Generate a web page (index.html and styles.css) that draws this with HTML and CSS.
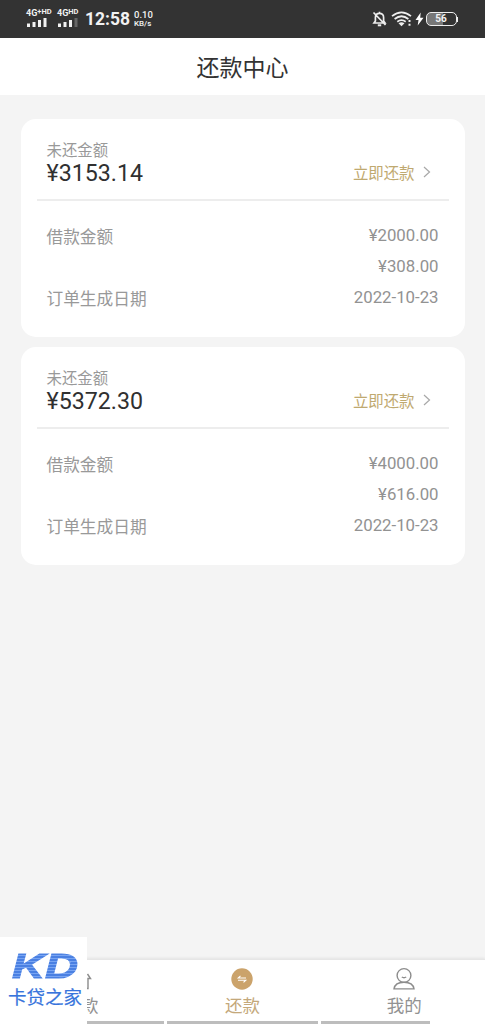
FILE: index.html
```html
<!DOCTYPE html>
<html lang="zh-CN">
<head>
<meta charset="utf-8">
<title>还款中心</title>
<link rel="stylesheet" href="styles.css">
</head>
<body>
<div class="screen">
  <div class="status">
    <div class="signal">
      <div class="net">4G<sup>+HD</sup></div>
      <svg width="21" height="9" viewBox="0 0 21 9" fill="#f2f2f2"><rect x="0" y="5.500" width="3" height="3.500"/><rect x="5.500" y="4" width="3" height="5"/><rect x="11" y="2" width="3" height="7"/><rect x="16.500" y="0" width="3" height="9"/></svg>
    </div>
    <div class="signal second">
      <div class="net">4G<sup>HD</sup></div>
      <svg width="21" height="9" viewBox="0 0 21 9" fill="#f2f2f2"><rect x="0" y="5.500" width="3" height="3.500"/><rect x="5.500" y="4" width="3" height="5"/><rect x="11" y="2" width="3" height="7"/><rect x="16.500" y="0" width="3" height="9" fill="#666"/></svg>
    </div>
    <div class="clock">12:58</div>
    <div class="speed"><div>0.10</div><div>KB/s</div></div>
    <div class="indicators">
      <svg width="15" height="16" viewBox="0 0 15 16" fill="none" stroke="#eee" stroke-width="1.700"><path d="M2 12h11l-1.400-2V6.500C11.600 4 10 2.300 7.500 2.300S3.400 4 3.400 6.500V10zM7.500.7v1.600M1.500 1.500l12 12.500"/><path d="M5.800 14.300h3.400" stroke-width="2"/></svg>
      <svg class="wifi" width="22" height="16" viewBox="0 0 22 16" fill="none" stroke="#eee" stroke-width="1.700"><path d="M1 5.200Q10.500-2.300 20 5.200M3.600 8Q10.500 2.500 17.400 8M6.300 10.700Q10.500 7.500 14.700 10.700"/><path d="M7.500 12.300Q10.500 10.300 13.500 12.300L10.500 15.300z" fill="#eee" stroke="none"/><path d="M18.500 9v2M18.500 12.800v2" stroke-width="2"/></svg>
      <svg class="bolt" width="9" height="14" viewBox="0 0 9 14" fill="#fff"><path d="M5.700.5 0.500 8h3L2.700 13.500 8.500 5.700H5.200z"/></svg>
      <div class="battery"><span class="level">56</span></div><i class="battery-tip"></i>
    </div>
  </div>
  <header class="header">还款中心</header>
  <main class="list">
    <section class="card">
      <div class="summary">
        <div><div class="caption">未还金额</div><div class="amount">¥3153.14</div></div>
        <a class="pay">立即还款<svg width="8" height="12" viewBox="0 0 8 12" fill="none" stroke="#a8a8a8" stroke-width="1.200"><path d="M1 1l5.500 5L1 11"/></svg></a>
      </div>
      <div class="details">
        <div class="row"><span>借款金额</span><span>¥2000.00</span></div>
        <div class="row"><span></span><span>¥308.00</span></div>
        <div class="row"><span>订单生成日期</span><span>2022-10-23</span></div>
      </div>
    </section>
    <section class="card">
      <div class="summary">
        <div><div class="caption">未还金额</div><div class="amount">¥5372.30</div></div>
        <a class="pay">立即还款<svg width="8" height="12" viewBox="0 0 8 12" fill="none" stroke="#a8a8a8" stroke-width="1.200"><path d="M1 1l5.500 5L1 11"/></svg></a>
      </div>
      <div class="details">
        <div class="row"><span>借款金额</span><span>¥4000.00</span></div>
        <div class="row"><span></span><span>¥616.00</span></div>
        <div class="row"><span>订单生成日期</span><span>2022-10-23</span></div>
      </div>
    </section>
  </main>
  <footer class="footer">
    <nav class="tabs">
      <div class="tab"><svg width="24" height="24" viewBox="0 0 24 24" fill="none" stroke="#8c8c8c" stroke-width="1.400"><path d="M12 2 5 6v15.500h14V11.500h2.500L18.500 7"/></svg><span>款</span></div>
      <div class="tab active"><svg width="24" height="24" viewBox="0 0 24 24"><circle cx="12" cy="12" r="10.700" fill="#cba36b"/><path d="M16 11H8.200l2.300-2.200M8 13.200h7.800l-2.300 2.200" fill="none" stroke="#fff" stroke-width="1.100"/></svg><span>还款</span></div>
      <div class="tab"><svg width="24" height="24" viewBox="0 0 24 24" fill="none" stroke="#8c8c8c" stroke-width="1.400"><circle cx="12" cy="8.500" r="6.900"/><path d="M9.800 10q2.200 1.400 4.400 0M2 21.900Q3 15.300 12 15.300T22 21.900z"/></svg><span>我的</span></div>
    </nav>
    <div class="strips"><i></i><i></i><i></i></div>
    <div class="watermark"><div class="mark">KD</div><div class="brand">卡贷之家</div></div>
  </footer>
</div>
</body>
</html>
```
FILE: styles.css
```css
* { box-sizing: border-box; }
body { margin: 0; font-family: Roboto, "Noto Sans CJK SC", sans-serif; }
.screen { width: 485px; height: 1024px; display: flex; flex-direction: column; background: #f4f4f4; overflow: hidden; }
svg { display: block; flex: none; }

.status { height: 38px; flex: none; background: #333; color: #f2f2f2; display: flex; align-items: center; padding: 0 27px 0 26px; }
.signal { width: 31px; height: 17px; margin-bottom: 2px; display: flex; flex-direction: column; justify-content: space-between; }
.signal svg { margin-left: 1px; }
.second { width: 28px; }
.net { font-size: 9px; line-height: 7px; font-weight: 700; white-space: nowrap; }
.net sup { font-size: 7.500px; line-height: 0; vertical-align: 2px; }
.clock { font-size: 17.500px; line-height: 20px; font-weight: 700; width: 49px; white-space: nowrap; }
.speed { font-size: 9.500px; line-height: 9px; font-weight: 500; }
.speed div + div { font-size: 8px; }
.indicators { margin-left: auto; display: flex; align-items: center; }
.indicators > svg:first-child { margin-right: -1px; position: relative; left: -2px; }
.wifi { margin-left: 3px; }
.bolt { margin-left: 2px; }
.battery { width: 31px; height: 14px; margin-left: 2px; border: 1.500px solid #eee; border-radius: 5px; background: linear-gradient(90deg, #777 56%, #333 56%); display: flex; align-items: center; justify-content: center; }
.level { font-size: 10px; line-height: 12px; font-weight: 700; }
.battery-tip { width: 1.500px; height: 5px; background: #eee; }

.header { height: 57px; flex: none; background: #fff; color: #333; font-size: 23px; line-height: 57px; padding-top: 2px; text-align: center; }

.list { flex: 1; padding: 24px 20.500px 0; display: flex; flex-direction: column; gap: 10.400px; }
.card { height: 218px; border-radius: 15px; background: #fff; padding: 0 16px; }
.summary { height: 82px; border-bottom: 2px solid #ededed; padding: 22px 18px 0 10px; display: flex; justify-content: space-between; }
.caption { color: #999; font-size: 15.400px; line-height: 20px; }
.amount { color: #303030; font-size: 23.200px; line-height: 25px; }
.pay { display: flex; align-items: center; gap: 8px; height: 20px; margin-top: 21px; color: #bfa970; font-size: 15.400px; }
.details { padding: 20px 10px 0; color: #929292; font-size: 16.800px; }
.row { height: 31px; line-height: 29px; display: flex; justify-content: space-between; }
.row span:first-child { font-size: 16.700px; color: #999; padding-top: 2px; }

.footer { position: relative; height: 65px; flex: none; background: #fff; border-top: 1px solid #e6e6e6; box-shadow: 0 -1px 2px #e4e4e4; display: flex; flex-direction: column; justify-content: space-between; }
.tabs { display: grid; grid-template-columns: repeat(3, 1fr); padding-top: 7px; }
.tab { display: flex; flex-direction: column; align-items: center; color: #929292; font-size: 17.500px; line-height: 30px; }
.tab:first-child span { padding-left: 18px; }
.tab.active { color: #c4a87b; }
.strips { display: grid; grid-template-columns: 164px 151px 109px; gap: 3px; height: 3px; }
.strips i { background: #bdbdbd; }
.watermark { position: absolute; left: 0; bottom: 0; width: 87px; height: 87px; background: #fff; padding-top: 10px; }
.mark { width: 60px; height: 38px; margin-left: 12px; font: italic 700 35px/37px "Liberation Sans", sans-serif; color: transparent; background: repeating-linear-gradient(#4a80e2 0 2px, #78a4f2 2px 3px); background-clip: text; -webkit-background-clip: text; -webkit-text-stroke: 1px transparent; transform: scaleX(1.310); transform-origin: left; }
.brand { color: #3774dc; font-size: 18.500px; line-height: 26px; text-align: center; padding-left: 3px; white-space: nowrap; -webkit-text-stroke: .2px #3774dc; }
```
